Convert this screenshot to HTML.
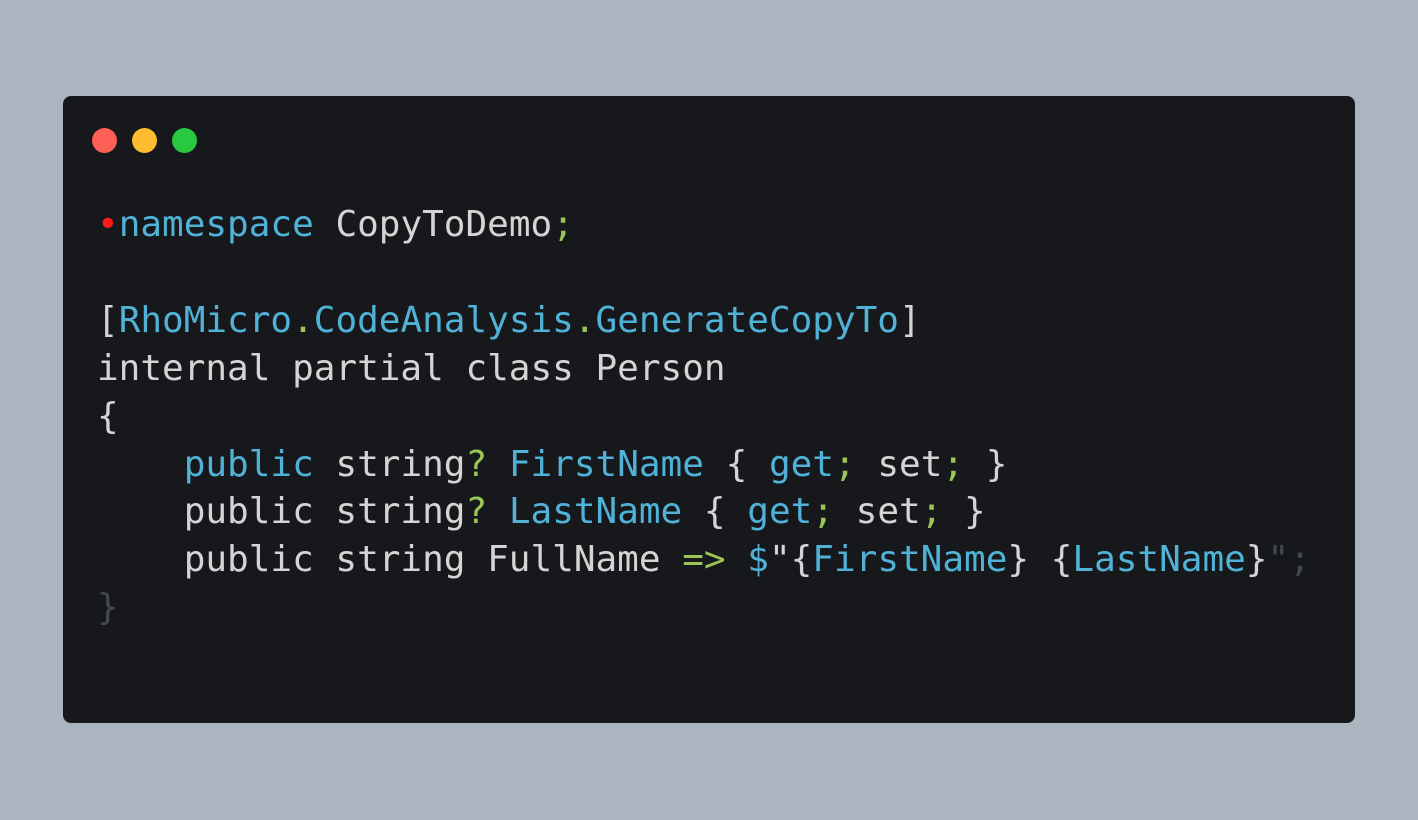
<!DOCTYPE html>
<html><head><style>
html,body{margin:0;padding:0;width:1418px;height:820px;background:#abb5bf;overflow:hidden}
.card{position:absolute;left:63px;top:96px;width:1292px;height:627px;background:#17181b;border-radius:8px}
.d{position:absolute;top:128px;width:25px;height:25px;border-radius:50%}
pre{position:absolute;left:97px;top:201px;margin:0;font-family:"DejaVu Sans Mono","Liberation Mono",monospace;font-size:36px;line-height:47.9px;color:#d4d4d4}
.b{color:#4fb2d6}.g{color:#9ac655}.x{color:#3e4a50}.r{color:#ff1a1a}
</style></head><body>
<div class="card"></div>
<div class="d" style="left:92px;background:#fe5f57"></div>
<div class="d" style="left:132px;background:#febc2e"></div>
<div class="d" style="left:172px;background:#28c840"></div>
<pre><span class="r">•</span><span class="b">namespace</span> CopyToDemo<span class="g">;</span>

[<span class="b">RhoMicro</span><span class="g">.</span><span class="b">CodeAnalysis</span><span class="g">.</span><span class="b">GenerateCopyTo</span>]
internal partial class Person
{
    <span class="b">public</span> string<span class="g">?</span> <span class="b">FirstName</span> { <span class="b">get</span><span class="g">;</span> set<span class="g">;</span> }
    public string<span class="g">?</span> <span class="b">LastName</span> { <span class="b">get</span><span class="g">;</span> set<span class="g">;</span> }
    public string FullName <span class="g">=&gt;</span> <span class="b">$</span>"{<span class="b">FirstName</span>} {<span class="b">LastName</span>}<span class="x">";</span>
<span class="x">}</span></pre>
</body></html>
